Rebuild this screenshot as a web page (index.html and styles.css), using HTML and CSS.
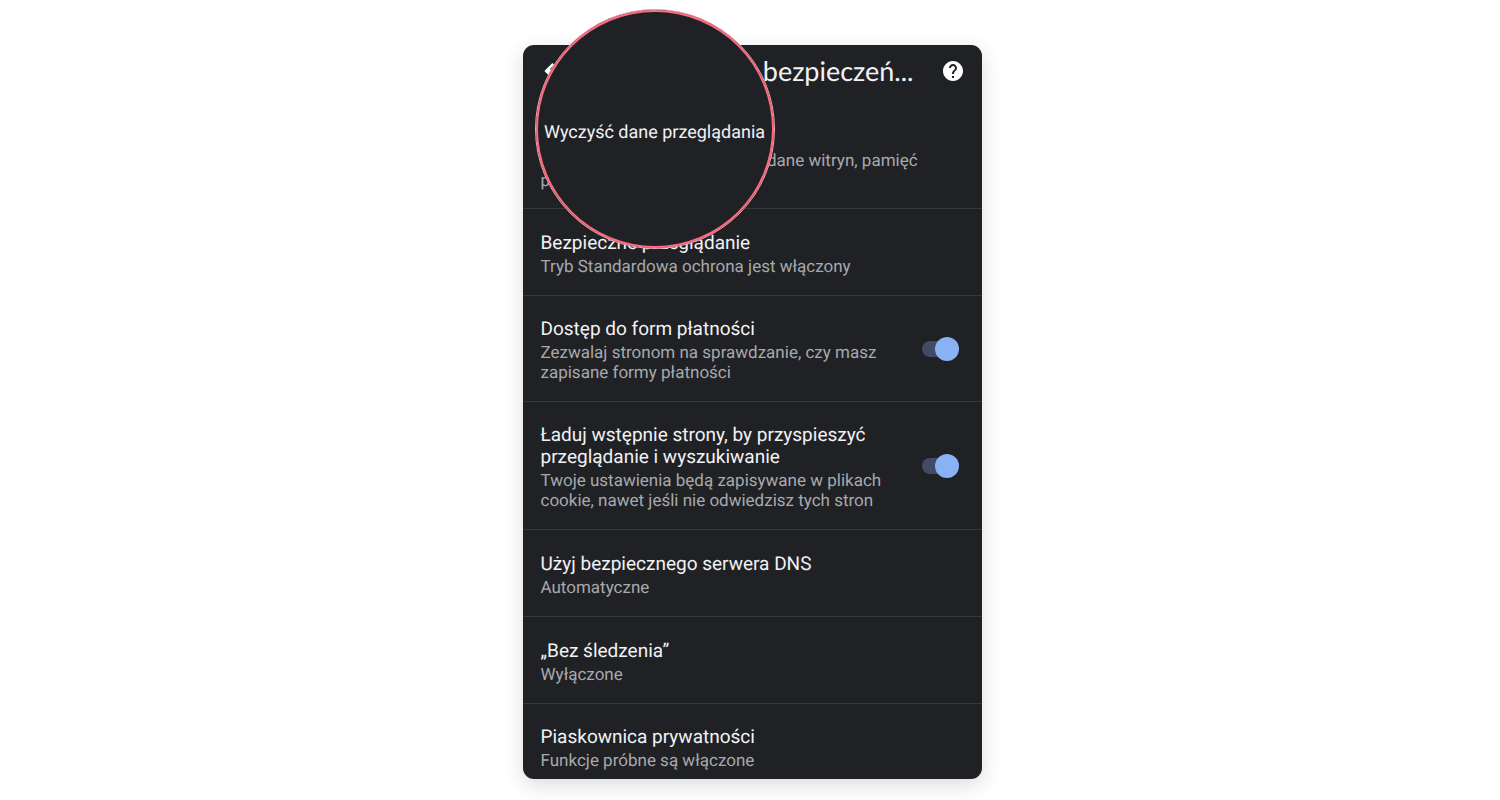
FILE: index.html
```html
<!DOCTYPE html>
<html lang="pl">
<head>
<meta charset="utf-8">
<meta name="viewport" content="width=device-width, initial-scale=1">
<title>Prywatność i bezpieczeństwo</title>
<link rel="stylesheet" href="styles.css">
</head>
<body>
<main class="phone">
  <header class="bar">
    <button class="icon-button" type="button" aria-label="Wstecz">
      <svg width="24" height="24" viewBox="0 0 24 24"><path d="M21 10.500H8.500l4.500-4.500L11.400 4 3.400 12l8 8 1.600-2-4.500-4.500H21z" fill="currentColor"/></svg>
    </button>
    <h1 class="bar-title">Prywatność i bezpieczeń...</h1>
    <button class="icon-button" type="button" aria-label="Pomoc">
      <svg width="24" height="24" viewBox="0 0 24 24"><path d="M12 2C6.480 2 2 6.480 2 12s4.480 10 10 10 10-4.480 10-10S17.520 2 12 2zm1 17h-2v-2h2v2zm2.070-7.750l-.9.920C13.450 12.900 13 13.500 13 15h-2v-.5c0-1.100.45-2.100 1.170-2.830l1.240-1.260c.37-.36.59-.86.59-1.410 0-1.100-.9-2-2-2s-2 .9-2 2H8c0-2.210 1.790-4 4-4s4 1.790 4 4c0 .88-.36 1.680-.93 2.250z" fill="currentColor"/></svg>
    </button>
  </header>
  <section class="row row-first">
    <p class="note">Wyczyść historię, pliki cookie, dane witryn, pamięć podręczną…</p>
  </section>
  <section class="row">
    <div class="text">
      <h2 class="title">Bezpieczne przeglądanie</h2>
      <p class="note">Tryb Standardowa ochrona jest włączony</p>
    </div>
  </section>
  <section class="row">
    <div class="text">
      <label class="title" for="payments">Dostęp do form płatności</label>
      <p class="note">Zezwalaj stronom na sprawdzanie, czy masz zapisane formy płatności</p>
    </div>
    <input class="switch" id="payments" type="checkbox" role="switch" checked>
  </section>
  <section class="row">
    <div class="text">
      <label class="title" for="preload">Ładuj wstępnie strony, by przyspieszyć przeglądanie i wyszukiwanie</label>
      <p class="note">Twoje ustawienia będą zapisywane w plikach cookie, nawet jeśli nie odwiedzisz tych stron</p>
    </div>
    <input class="switch" id="preload" type="checkbox" role="switch" checked>
  </section>
  <section class="row">
    <div class="text">
      <h2 class="title">Użyj bezpiecznego serwera DNS</h2>
      <p class="note">Automatyczne</p>
    </div>
  </section>
  <section class="row">
    <div class="text">
      <h2 class="title">„Bez śledzenia”</h2>
      <p class="note">Wyłączone</p>
    </div>
  </section>
  <section class="row row-last">
    <div class="text">
      <h2 class="title">Piaskownica prywatności</h2>
      <p class="note">Funkcje próbne są włączone</p>
    </div>
  </section>
  <div class="lens"><h2 class="lens-title">Wyczyść dane przeglądania</h2></div>
</main>
</body>
</html>
```
FILE: styles.css
```css
* { box-sizing: border-box; }

body {
  margin: 0;
  padding: 45px 16px 21px 20px;
  background: #fff;
  font-family: Roboto, "Liberation Sans", sans-serif;
  text-rendering: geometricPrecision;
}

h1, h2, p { margin: 0; font-weight: 400; }

.phone {
  position: relative;
  max-width: 459px;
  margin: 0 auto;
  border-radius: 11px;
  background: #202125;
  color: #f1f2f4;
  box-shadow: 0 6px 20px rgba(32, 33, 37, 0.16);
}

.bar {
  display: flex;
  align-items: center;
  padding: 10px 17px 10px 18px;
}

.bar-title {
  flex: 1;
  padding-right: 27px;
  font-family: Lato, Roboto, sans-serif;
  font-size: 27px;
  line-height: 32px;
  text-align: right;
  white-space: nowrap;
}

.icon-button {
  display: flex;
  padding: 0;
  border: 0;
  background: none;
  color: #fff;
}

.row {
  display: flex;
  align-items: center;
  justify-content: space-between;
  min-height: 87px;
  padding: 18px 23px 18px 18px;
  border-bottom: 1px solid #37383c;
}

.row-first {
  padding: 54px 56px 17px 18px;
}

.row-last {
  min-height: 0;
  padding-bottom: 8px;
  border-bottom: 0;
}

.text {
  max-width: 350px;
  padding-top: 4px;
}

.title {
  display: block;
  font-size: 19px;
  line-height: 22px;
}

.note {
  color: #a8a9ac;
  font-size: 17px;
  line-height: 20px;
}

.text .note { margin-top: 3px; }

.switch {
  position: relative;
  flex: none;
  width: 37px;
  height: 24px;
  margin: 0;
  appearance: none;
}

.switch::before,
.switch::after {
  content: "";
  position: absolute;
}

.switch::before {
  inset: 4px 7px 4px 0;
  border-radius: 8px;
  background: #414b63;
}

.switch::after {
  top: 0;
  right: 0;
  width: 24px;
  height: 24px;
  border-radius: 50%;
  background: #8ab0f5;
}

.lens {
  position: absolute;
  top: -36px;
  left: 12px;
  display: grid;
  place-items: center;
  width: 240px;
  height: 240px;
  padding-top: 8px;
  border: 1px solid #f7a3b0;
  border-radius: 50%;
  background: #202125;
  box-shadow: inset 0 0 0 2px #fb6a80;
  white-space: nowrap;
}

.lens-title {
  font-size: 18px;
  line-height: 22px;
}
```
